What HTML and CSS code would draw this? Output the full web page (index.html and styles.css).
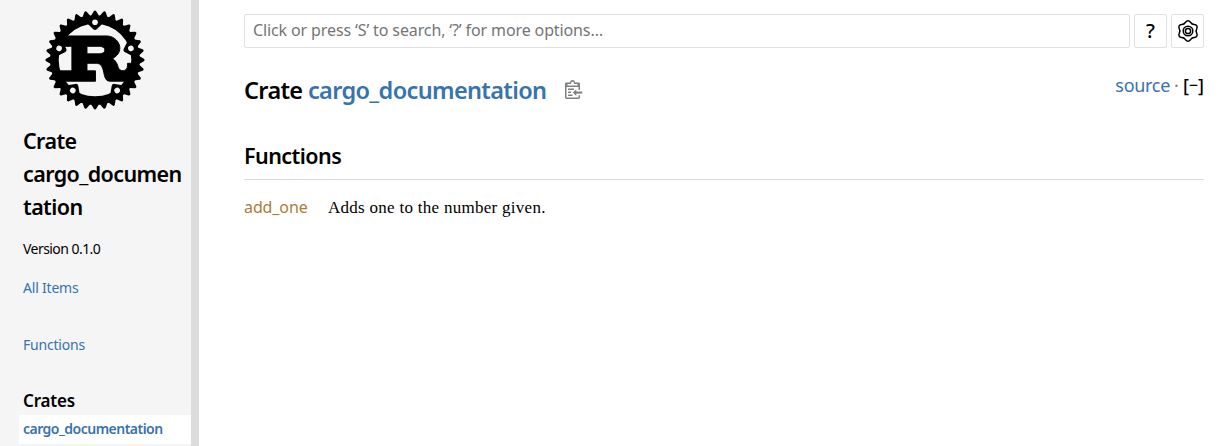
FILE: index.html
```
<!DOCTYPE html>
<html lang="en">
<head>
<meta charset="utf-8">
<title>cargo_documentation - Rust</title>
<link rel="stylesheet" href="styles.css">
</head>
<body>
<nav class="sidebar">
  <svg class="logo" viewBox="0 0 106 106" aria-label="Rust">
    <defs>
      <polygon id="cog" stroke="#000" stroke-width="3" stroke-linejoin="round" points="46,3 51,0 46,-3"/>
      <g id="cogs4"><use href="#cog"/><use href="#cog" transform="rotate(11.25)"/><use href="#cog" transform="rotate(22.5)"/><use href="#cog" transform="rotate(33.75)"/></g>
      <g id="cogs8"><use href="#cogs4"/><use href="#cogs4" transform="rotate(45)"/></g>
      <polygon id="mount" stroke="#000" stroke-width="6" stroke-linejoin="round" points="-7,-42 0,-35 7,-42"/>
      <circle id="hole" cy="-40" r="3"/>
      <mask id="holes" maskUnits="userSpaceOnUse" x="-60" y="-60" width="120" height="120">
        <rect x="-60" y="-60" width="120" height="120" fill="#fff"/>
        <use href="#hole"/><use href="#hole" transform="rotate(72)"/><use href="#hole" transform="rotate(144)"/><use href="#hole" transform="rotate(216)"/><use href="#hole" transform="rotate(288)"/>
      </mask>
    </defs>
    <g transform="translate(53 53)">
      <path transform="translate(.5 .5)" stroke="#000" stroke-linejoin="round" d="M-9-15H4C12-15 12-7 4-7H-9ZM-40 22H0V11H-9V3H1C12 3 6 22 15 22H40V3H34V5C34 13 25 12 24 7 23 2 19-2 18-2 33-10 24-26 12-26H-35V-15H-25V11H-40Z"/>
      <g mask="url(#holes)">
        <circle r="43" fill="none" stroke="#000" stroke-width="9"/>
        <use href="#cogs8"/><use href="#cogs8" transform="rotate(90)"/><use href="#cogs8" transform="rotate(180)"/><use href="#cogs8" transform="rotate(270)"/>
        <use href="#mount"/><use href="#mount" transform="rotate(72)"/><use href="#mount" transform="rotate(144)"/><use href="#mount" transform="rotate(216)"/><use href="#mount" transform="rotate(288)"/>
      </g>
    </g>
  </svg>
  <h2 class="location">Crate<br>cargo_documen<br>tation</h2>
  <div class="version">Version 0.1.0</div>
  <a class="all-items">All Items</a>
  <a class="section-link">Functions</a>
  <h3 class="crates-title">Crates</h3>
  <a class="current">cargo_documentation</a>
</nav>
<div class="resizer"></div>
<main class="content">
  <form class="search">
    <input class="search-input" type="text" placeholder="Click or press ‘S’ to search, ‘?’ for more options…">
    <button class="tool help" type="button">?</button>
    <button class="tool" type="button" aria-label="Settings">
      <svg class="wheel" viewBox="-11 -11 22 22" fill="none" stroke="#000">
        <defs><path id="lobe" stroke-width="1.5" stroke-linecap="round" d="M-4.1-7.1C-2.3-8.1-2.1-10.2 0-10.2S2.3-8.1 4.1-7.1"/></defs>
        <use href="#lobe"/><use href="#lobe" transform="rotate(60)"/><use href="#lobe" transform="rotate(120)"/><use href="#lobe" transform="rotate(180)"/><use href="#lobe" transform="rotate(240)"/><use href="#lobe" transform="rotate(300)"/>
        <circle r="4.8" stroke-width="1.5"/><circle r="2.6" stroke-width="1.5"/>
      </svg>
    </button>
  </form>
  <div class="heading">
    <h1 class="title">Crate <a class="name">cargo_documentation</a></h1>
    <svg class="clip" viewBox="0 0 24 25"><path d="M18 20h2v3c0 1-1 2-2 2H2c-.998 0-2-1-2-2V5c0-.911.755-1.667 1.667-1.667h5A3.323 3.323 0 0110 0a3.323 3.323 0 013.333 3.333h5C19.245 3.333 20 4.09 20 5v8.333h-2V9H2v14h16v-3zM3 7h14c0-.911-.793-1.667-1.75-1.667H13.5c-.957 0-1.75-.755-1.75-1.666C11.75 2.755 10.957 2 10 2s-1.75.755-1.75 1.667c0 .911-.793 1.666-1.75 1.666H4.75C3.793 5.333 3 6.09 3 7z"/><path d="M4 19h6v2H4zM12 11H4v2h8zM4 17h4v-2H4zM15 15v-3l-4.5 4.5L15 21v-3l8.027-.032L23 15z"/></svg>
    <div class="out"><a class="source">source</a><span class="dot">·</span><span class="toggle">[<span class="minus">−</span>]</span></div>
  </div>
  <h2 class="section">Functions</h2>
  <div class="row"><a class="fn">add_one</a><span class="desc">Adds one to the number given.</span></div>
</main>
</body>
</html>
```
FILE: styles.css
```
* { box-sizing: border-box; }
body {
  margin: 0;
  height: 446px;
  display: flex;
  overflow: hidden;
  background: #fff;
  color: #000;
  font: 16px/24px "Noto Sans", "Open Sans", sans-serif;
}
h1, h2, h3 { margin: 0; font-weight: 600; }
a { color: #3873ad; white-space: nowrap; }
.sidebar {
  width: 191px;
  flex: none;
  display: flex;
  flex-direction: column;
  padding: 10px 0 0 19px;
  background: #f5f5f5;
}
.sidebar > * { flex: none; }
.logo { width: 100px; height: 100px; margin-left: 26px; }
.location { margin: 14px 0 0 4px; font-size: 21.5px; line-height: 33px; letter-spacing: -.6px; }
.version { margin: 15px 0 0 4px; font-size: 14px; line-height: 22px; letter-spacing: -.55px; }
.all-items { margin: 17px 0 0 4px; font-size: 14px; line-height: 22px; letter-spacing: -.2px; }
.section-link { margin: 35px 0 0 4px; font-size: 14px; line-height: 22px; letter-spacing: -.2px; }
.crates-title { margin: 33px 0 0 4px; font-size: 17px; line-height: 24px; letter-spacing: -.2px; }
.current { margin-top: 2px; padding-left: 4px; font-size: 14px; line-height: 27px; height: 29px; font-weight: 600; letter-spacing: -.52px; background: #fff; }
.resizer { width: 8px; flex: none; background: #dcdcdc; }
.content { flex: 1; padding: 14px 27px 0 45px; }
.search { display: flex; gap: 4px; height: 34px; }
.search-input {
  flex: 1;
  min-width: 0;
  padding: 0 8px 2px;
  border: 1px solid #e0e0e0;
  border-radius: 2px;
  font: 16px "Noto Sans", sans-serif;
  letter-spacing: -.12px;
}
.search-input::placeholder { color: #757575; opacity: 1; }
.tool {
  width: 33px;
  padding: 0;
  display: flex;
  align-items: center;
  justify-content: center;
  border: 1px solid #e0e0e0;
  border-radius: 2px;
  background: #fff;
  color: #000;
  font: 500 20px "Noto Sans", sans-serif;
}
.help { padding-bottom: 2px; }
.wheel { width: 22px; height: 22px; }
.heading { display: flex; height: 36px; margin-top: 24px; }
.title { width: 303px; font-size: 23.5px; line-height: 36px; letter-spacing: -.66px; white-space: nowrap; }
.clip { width: 18px; height: 19px; margin: 8px 0 0 18px; fill: #808080; }
.out { display: flex; margin-left: auto; font-size: 18px; line-height: 26px; }
.source { letter-spacing: -.3px; }
.dot { margin: 0 4px; color: #808080; }
.toggle { display: flex; font-weight: 500; }
.minus { font-size: 16px; line-height: 27px; }
.section { margin-top: 28px; height: 44px; border-bottom: 1px solid #dcdcdc; font-size: 21.5px; line-height: 40px; letter-spacing: -.55px; }
.row { display: flex; margin-top: 15px; }
.fn { width: 84px; color: #ad7c37; letter-spacing: -.1px; }
.desc { font: 17px/26px "Liberation Serif", serif; letter-spacing: .28px; white-space: nowrap; }
```
